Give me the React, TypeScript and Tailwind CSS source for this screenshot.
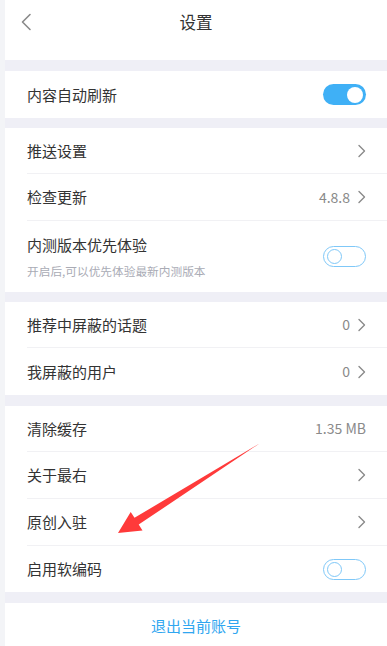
import React from "react";

const font = { fontFamily: '"Noto Sans CJK SC", "Noto Sans", sans-serif' };

function Chevron() {
  return (
    <svg width="8" height="14" viewBox="0 0 8 14" className="ml-[8px]">
      <path d="M1 1.5 L6.5 7 L1 12.5" fill="none" stroke="#8a8a8a" strokeWidth="1.4" strokeLinecap="round" strokeLinejoin="round" />
    </svg>
  );
}

function Toggle({ on }: { on: boolean }) {
  if (on) {
    return (
      <div className="w-[43px] h-[21px] rounded-full bg-[#3fb0f6] flex items-center justify-end pr-[3px]">
        <div className="w-[16px] h-[16px] rounded-full bg-white" />
      </div>
    );
  }
  return (
    <div className="w-[43px] h-[21px] rounded-full border border-[#7fc8f8] bg-white flex items-center pl-[3px]">
      <div className="w-[15px] h-[15px] rounded-full border border-[#7fc8f8]" />
    </div>
  );
}

function Row({
  label,
  value,
  chevron,
  toggle,
  sub,
  h,
  divider,
}: {
  label: string;
  value?: string;
  chevron?: boolean;
  toggle?: boolean | null;
  sub?: string;
  h: string;
  divider?: boolean;
}) {
  return (
    <div className="bg-white pl-[22px]">
      <div className={`${h} flex items-center pr-[21px] ${divider ? "border-b border-[#f1f1f4]" : ""}`}>
        <div className="flex-1 flex flex-col">
          <span className="text-[15px] text-[#333333] leading-[20px]">{label}</span>
          {sub && <span className="text-[11.7px] text-[#a9abb5] leading-[14px] mt-[9px]">{sub}</span>}
        </div>
        {value && <span className="text-[14px] text-[#8a8a8a]">{value}</span>}
        {chevron && <Chevron />}
        {toggle !== undefined && toggle !== null && <Toggle on={toggle} />}
      </div>
    </div>
  );
}

function Band({ h }: { h: string }) {
  return <div className={`${h} bg-[#efeff6]`} />;
}

export default function App() {
  return (
    <div className="relative w-[387px] h-[646px] overflow-hidden flex bg-white" style={font}>
      <div className="w-[5px] bg-[#f3f4f7]" />
      <div className="flex-1 flex flex-col">
        {/* Header */}
        <div className="h-[60px] relative flex items-start justify-center bg-white">
          <svg width="12" height="18" viewBox="0 0 12 18" className="absolute left-[15px] top-[13px]">
            <path d="M10 1.5 L2.5 9 L10 16.5" fill="none" stroke="#8a8a8a" strokeWidth="1.6" strokeLinecap="round" strokeLinejoin="round" />
          </svg>
          <span className="mt-[10px] text-[16.5px] text-[#333333]">设置</span>
        </div>
        <Band h="h-[11px]" />
        <Row label="内容自动刷新" toggle={true} h="h-[47px]" />
        <Band h="h-[10px]" />
        <Row label="推送设置" chevron h="h-[46px]" divider />
        <Row label="检查更新" value="4.8.8" chevron h="h-[47px]" divider />
        <Row label="内测版本优先体验" sub="开启后,可以优先体验最新内测版本" toggle={false} h="h-[71px]" />
        <Band h="h-[10px]" />
        <Row label="推荐中屏蔽的话题" value="0" chevron h="h-[46px]" divider />
        <Row label="我屏蔽的用户" value="0" chevron h="h-[47px]" />
        <Band h="h-[11px]" />
        <Row label="清除缓存" value="1.35 MB" h="h-[46px]" divider />
        <Row label="关于最右" chevron h="h-[47px]" divider />
        <Row label="原创入驻" chevron h="h-[47px]" divider />
        <Row label="启用软编码" toggle={false} h="h-[46px]" />
        <Band h="h-[11px]" />
        <div className="h-[43px] bg-white flex items-center justify-center pt-[3px]">
          <span className="text-[15px] text-[#2fa6f0]">退出当前账号</span>
        </div>
      </div>
      {/* Red annotation arrow */}
      <svg className="absolute left-0 top-0 pointer-events-none" width="387" height="646" viewBox="0 0 387 646">
        <polygon
          points="261,442.5 138.7,524.6 142.5,530.5 118,533 130.7,511.9 134.5,517.8 259.5,443.5"
          fill="#ff3a3a"
        />
      </svg>
    </div>
  );
}
